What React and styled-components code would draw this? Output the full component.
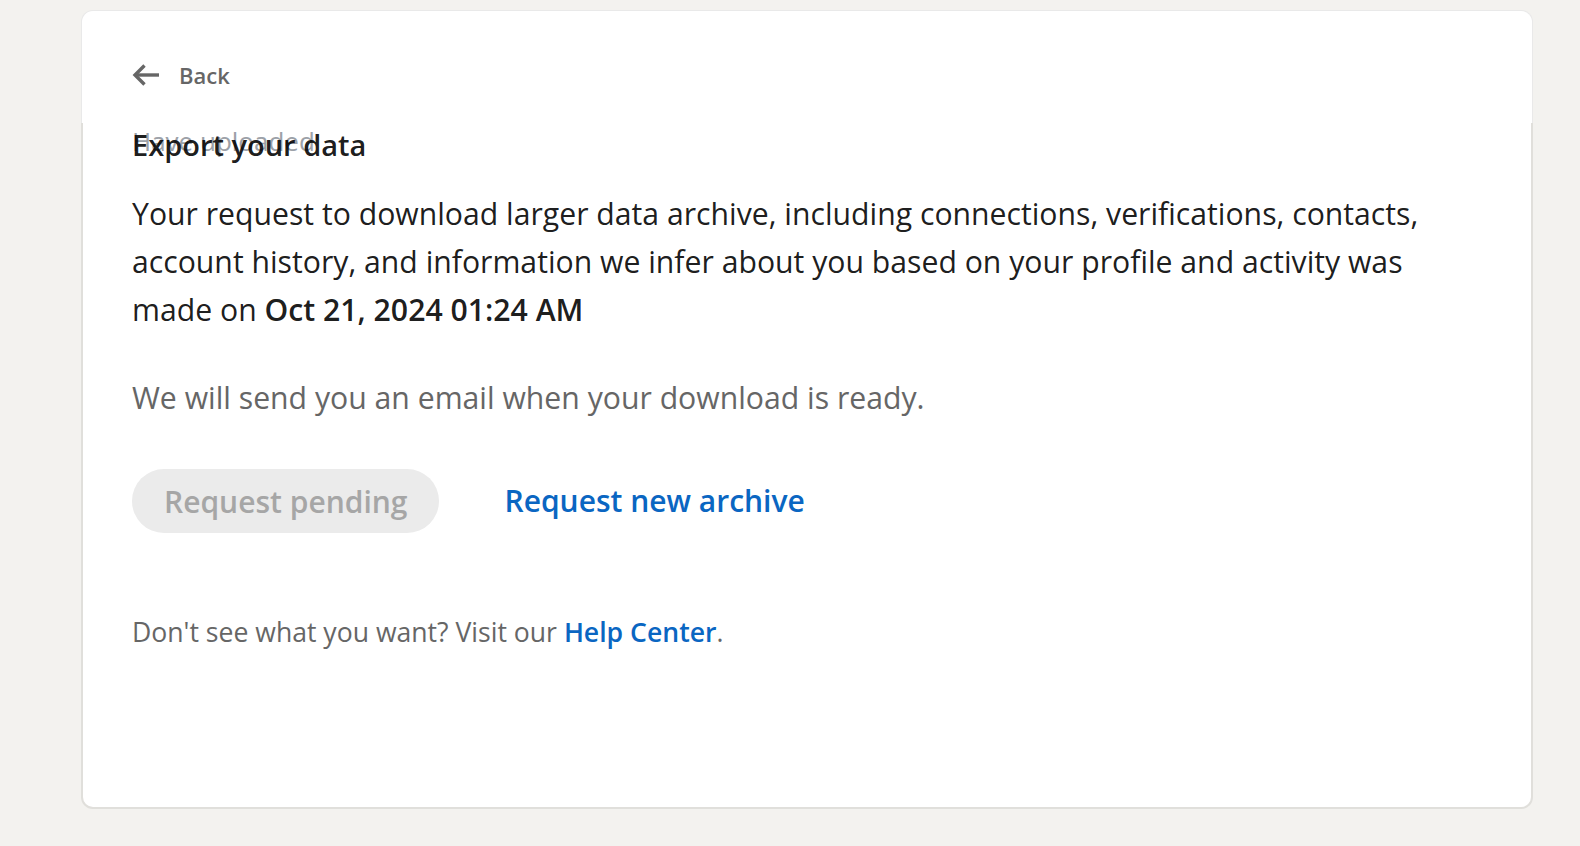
import React from 'react';
import styled, { createGlobalStyle } from 'styled-components';

const GlobalStyle = createGlobalStyle`
  html, body {
    margin: 0;
    padding: 0;
    background: #f3f2ef;
  }
  body {
    font-family: "Open Sans", "Noto Sans", "Liberation Sans", sans-serif;
    color: rgba(0, 0, 0, 0.9);
  }
`;


const Page = styled.div`
  padding: 10px 0 0 81px;
  min-height: 836px;
`;


const Card = styled.div`
  width: 1452px;
  display: flex;
  flex-direction: column;
`;


const CardHeader = styled.div`
  box-sizing: border-box;
  height: 113px;
  padding: 48px 49px 0 50px;
  background: #fff;
  border: 1px solid #e9e9e9;
  border-bottom: none;
  border-radius: 12px 12px 0 0;
`;


const BackButton = styled.button`
  display: flex;
  align-items: center;
  gap: 19px;
  height: 32px;
  padding: 0;
  border: none;
  background: none;
  color: #666;
  font-family: inherit;
  font-size: 22px;
  font-weight: 600;
  line-height: 32px;
  cursor: pointer;
`;


const CardBody = styled.div`
  position: relative;
  box-sizing: border-box;
  height: 686px;
  padding: 4px 49px 0 49px;
  background: #fff;
  border: 2px solid #e0dfdb;
  border-top: none;
  border-radius: 0 0 12px 12px;
`;


const GhostText = styled.div`
  position: absolute;
  left: 49px;
  top: 0;
  font-size: 26px;
  line-height: 36px;
  color: #9ca1a8;
`;


const Title = styled.h1`
  position: relative;
  margin: 0;
  font-size: 29px;
  line-height: 36px;
  font-weight: 600;
  color: rgba(0, 0, 0, 0.9);
`;


const Paragraph = styled.p`
  margin: ${(p) => p.$top}px 0 0;
  max-width: 1330px;
  font-size: 30.2px;
  line-height: 48px;
  color: ${(p) => (p.$muted ? '#666' : 'rgba(0, 0, 0, 0.9)')};

  strong {
    font-weight: 600;
  }
`;


const Actions = styled.div`
  display: flex;
  align-items: center;
  gap: 65px;
  margin-top: 47px;
`;


const PendingButton = styled.button`
  height: 64px;
  padding: 0 32px;
  border: none;
  border-radius: 32px;
  background: #ebebeb;
  color: #a6a6a6;
  font-family: inherit;
  font-size: 30px;
  font-weight: 600;
  cursor: default;
`;


const LinkButton = styled.a`
  color: #0a66c2;
  font-size: 30px;
  font-weight: 600;
  line-height: 64px;
  text-decoration: none;
  cursor: pointer;
`;


const Footer = styled.p`
  margin: 81px 0 0;
  font-size: 26.6px;
  line-height: 36px;
  color: #666;

  a {
    color: #0a66c2;
    font-weight: 600;
    text-decoration: none;
  }
`;


function ArrowLeft() {
  return (
    <svg width="28" height="24" viewBox="0 0 28 24" fill="none">
      <polyline
        points="12.5,2.5 3,12 12.5,21.5"
        stroke="#666"
        strokeWidth="3.4"
        strokeLinejoin="miter"
      />
      <line x1="3.5" y1="12" x2="27" y2="12" stroke="#666" strokeWidth="3.4" />
    </svg>
  );
}


export default function App() {
  return (
    <Page>
      <GlobalStyle />
      <Card>
        <CardHeader>
          <BackButton>
            <ArrowLeft />
            Back
          </BackButton>
        </CardHeader>
        <CardBody>
          <GhostText>Have uploaded</GhostText>
          <Title>Export your data</Title>
          <Paragraph $top={27}>
            Your request to download larger data archive, including connections,
            verifications, contacts, account history, and information we infer
            about you based on your profile and activity was made on{' '}
            <strong>Oct 21, 2024 01:24 AM</strong>
          </Paragraph>
          <Paragraph $top={40} $muted>
            We will send you an email when your download is ready.
          </Paragraph>
          <Actions>
            <PendingButton disabled>Request pending</PendingButton>
            <LinkButton>Request new archive</LinkButton>
          </Actions>
          <Footer>
            Don't see what you want? Visit our <a>Help Center</a>.
          </Footer>
        </CardBody>
      </Card>
    </Page>
  );
}
